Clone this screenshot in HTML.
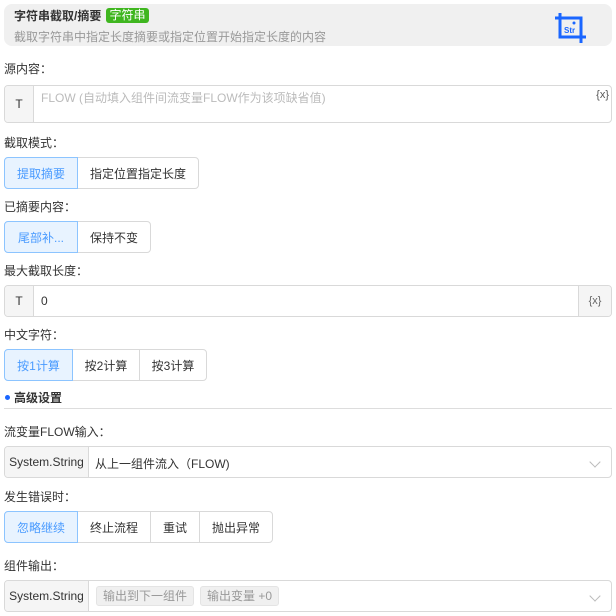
<!DOCTYPE html>
<html><head><meta charset="utf-8"><style>
*{box-sizing:border-box;margin:0;padding:0}
body{width:616px;height:616px;background:#fff;font-family:"Liberation Sans","Noto Sans CJK SC",sans-serif;font-size:12px;color:#333;position:relative;overflow:hidden}
.a{position:absolute}
.hdr{left:4px;top:4px;width:608px;height:42px;background:#f0f0f0;border-radius:8px}
.lbl{left:4px;font-size:12px;color:#333}
.box{border:1px solid #d9d9d9;border-radius:4px;background:#fff}
.pre{background:#f5f5f5;border-right:1px solid #d9d9d9;display:flex;align-items:center;justify-content:center;color:#333}
.grp{display:flex;height:32px}
.grp div{border:1px solid #d9d9d9;margin-left:-1px;display:flex;align-items:center;justify-content:center;font-size:12px;color:#333;background:#fff}
.grp div:first-child{margin-left:0;border-radius:4px 0 0 4px}
.grp div:last-child{border-radius:0 4px 4px 0}
.grp .on{background:#e8f3ff;border-color:#8cc4ff;color:#4a9bff;position:relative;z-index:1}
.chev{position:absolute;right:12px;top:11px;width:8px;height:8px;border-right:1px solid #bbb;border-bottom:1px solid #bbb;transform:rotate(45deg)}
.tag{background:#f0f0f0;border:1px solid #e4e4e4;border-radius:3px;color:#999;padding:0 6px;height:20px;line-height:18px;margin-right:6px;font-size:12px}
</style></head><body>
<div class="a hdr"></div>
<div class="a" style="left:14px;top:8px;font-weight:bold;font-size:12px;line-height:16px">字符串截取/摘要</div>
<div class="a" style="left:106px;top:8px;width:43px;height:15px;background:#3fb61f;border-radius:3px;color:#fff;font-size:12px;line-height:15px;text-align:center">字符串</div>
<div class="a" style="left:14px;top:28px;color:#999;font-size:12px">截取字符串中指定长度摘要或指定位置开始指定长度的内容</div>
<svg class="a" style="left:552px;top:12px" width="42" height="32" viewBox="0 0 42 32"><path d="M8 1V25H34M3 6H29V31" fill="none" stroke="#1a66ff" stroke-width="3"/><circle cx="22" cy="11" r="1.5" fill="#1a66ff"/><text x="12" y="21" font-size="8" font-weight="bold" fill="#1a66ff" font-family="Liberation Sans">Str</text></svg>

<div class="a lbl" style="top:60px">源内容：</div>
<div class="a box" style="left:4px;top:85px;width:608px;height:38px;overflow:hidden">
<div class="a pre" style="left:0;top:0;width:29px;height:36px">T</div>
<div class="a" style="left:36px;top:3px;color:#bbb">FLOW (自动填入组件间流变量FLOW作为该项缺省值)</div>
<div class="a" style="right:2px;top:3px;color:#555;font-size:11px">{x}</div>
</div>

<div class="a lbl" style="top:134px">截取模式：</div>
<div class="a grp" style="left:4px;top:157px"><div class="on" style="width:74px">提取摘要</div><div style="width:122px">指定位置指定长度</div></div>

<div class="a lbl" style="top:198px">已摘要内容：</div>
<div class="a grp" style="left:4px;top:221px"><div class="on" style="width:74px">尾部补...</div><div style="width:74px">保持不变</div></div>

<div class="a lbl" style="top:262px">最大截取长度：</div>
<div class="a box" style="left:4px;top:285px;width:608px;height:32px;overflow:hidden">
<div class="a pre" style="left:0;top:0;width:29px;height:30px">T</div>
<div class="a" style="left:36px;top:8px">0</div>
<div class="a pre" style="right:0;top:0;width:33px;height:30px;border-right:0;border-left:1px solid #d9d9d9;font-size:11px;color:#666">{x}</div>
</div>

<div class="a lbl" style="top:326px">中文字符：</div>
<div class="a grp" style="left:4px;top:349px"><div class="on" style="width:69px">按1计算</div><div style="width:68px">按2计算</div><div style="width:68px">按3计算</div></div>

<div class="a" style="left:5px;top:395px;width:5px;height:5px;border-radius:50%;background:#1a66ff"></div>
<div class="a" style="left:14px;top:389px;font-weight:bold">高级设置</div>
<div class="a" style="left:4px;top:408px;width:608px;height:1px;background:#ddd"></div>

<div class="a lbl" style="top:423px">流变量FLOW输入：</div>
<div class="a box" style="left:4px;top:446px;width:608px;height:32px;overflow:hidden">
<div class="a pre" style="left:0;top:0;width:84px;height:30px">System.String</div>
<div class="a" style="left:90px;top:8px">从上一组件流入（FLOW)</div>
<div class="chev"></div>
</div>

<div class="a lbl" style="top:488px">发生错误时：</div>
<div class="a grp" style="left:4px;top:511px"><div class="on" style="width:74px">忽略继续</div><div style="width:74px">终止流程</div><div style="width:50px">重试</div><div style="width:74px">抛出异常</div></div>

<div class="a lbl" style="top:557px">组件输出：</div>
<div class="a box" style="left:4px;top:580px;width:608px;height:32px;overflow:hidden">
<div class="a pre" style="left:0;top:0;width:84px;height:30px">System.String</div>
<div class="a" style="left:91px;top:5px;display:flex"><span class="tag">输出到下一组件</span><span class="tag">输出变量 +0</span></div>
<div class="chev"></div>
</div>
</body></html>
